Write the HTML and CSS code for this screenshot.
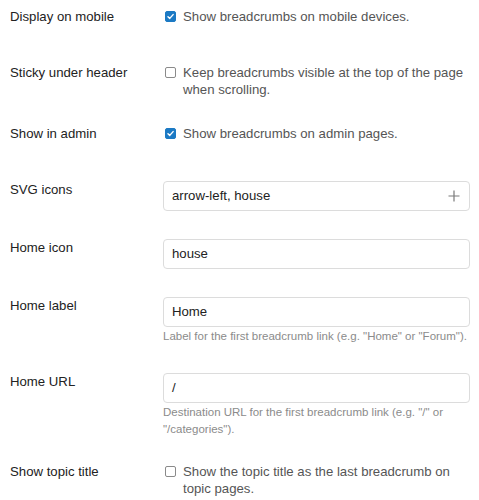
FILE: index.html
```html
<!DOCTYPE html>
<html lang="en">
<head>
<meta charset="utf-8">
<title>Breadcrumb settings</title>
<link rel="stylesheet" href="styles.css">
</head>
<body>
<div class="settings">
  <div class="row row-check">
    <div class="label">Display on mobile</div>
    <div class="control">
      <label class="check"><span class="box on"><svg viewBox="0 0 10 10"><path d="M2.2 5.2 4.2 7.1 7.9 2.9"/></svg></span><span class="check-text">Show breadcrumbs on mobile devices.</span></label>
    </div>
  </div>
  <div class="row row-check">
    <div class="label">Sticky under header</div>
    <div class="control">
      <label class="check"><span class="box"></span><span class="check-text">Keep breadcrumbs visible at the top of the page when scrolling.</span></label>
    </div>
  </div>
  <div class="row row-check">
    <div class="label">Show in admin</div>
    <div class="control">
      <label class="check"><span class="box on"><svg viewBox="0 0 10 10"><path d="M2.2 5.2 4.2 7.1 7.9 2.9"/></svg></span><span class="check-text">Show breadcrumbs on admin pages.</span></label>
    </div>
  </div>
  <div class="row row-input">
    <div class="label">SVG icons</div>
    <div class="control">
      <div class="field list-field"><span>arrow-left, house</span><svg class="plus" viewBox="0 0 12 12"><path d="M6 0.5v11M0.5 6h11"/></svg></div>
    </div>
  </div>
  <div class="row row-input">
    <div class="label">Home icon</div>
    <div class="control">
      <div class="field">house</div>
    </div>
  </div>
  <div class="row row-input">
    <div class="label">Home label</div>
    <div class="control">
      <div class="field">Home</div>
      <div class="help">Label for the first breadcrumb link (e.g. "Home" or "Forum").</div>
    </div>
  </div>
  <div class="row row-input row-tight">
    <div class="label">Home URL</div>
    <div class="control">
      <div class="field">/</div>
      <div class="help">Destination URL for the first breadcrumb link (e.g. "/" or "/categories").</div>
    </div>
  </div>
  <div class="row row-check">
    <div class="label">Show topic title</div>
    <div class="control">
      <label class="check"><span class="box"></span><span class="check-text">Show the topic title as the last breadcrumb on topic pages.</span></label>
    </div>
  </div>
</div>
</body>
</html>
```

FILE: styles.css
```css
html, body {
  margin: 0;
  padding: 0;
  background: #ffffff;
}

body {
  font-family: "Liberation Sans", Arial, sans-serif;
  font-size: 13.2px;
  line-height: 17px;
  color: #222222;
}

.settings {
  padding: 8px 9px 0 10px;
}

.row {
  display: flex;
  align-items: flex-start;
}

.row-check {
  min-height: 28px;
  margin-bottom: 27.5px;
}

.row-input {
  margin-bottom: 28px;
}

.row-input.row-tight {
  margin-bottom: 25px;
}

.label {
  width: 153px;
  flex: none;
  color: #222222;
}

.control {
  flex: 1;
  min-width: 0;
}

.check {
  display: flex;
  align-items: flex-start;
  color: #555555;
}

.box {
  flex: none;
  width: 11px;
  height: 11px;
  box-sizing: border-box;
  margin: 3px 7px 0 2px;
  border: 1px solid #8a8a8a;
  border-radius: 2px;
  background: #ffffff;
  display: flex;
}

.box.on {
  border-color: #1c7ac4;
  background: #1c7ac4;
}

.box svg {
  width: 100%;
  height: 100%;
}

.box svg path {
  fill: none;
  stroke: #ffffff;
  stroke-width: 1.6;
  stroke-linecap: round;
  stroke-linejoin: round;
}

.field {
  height: 30px;
  box-sizing: border-box;
  border: 1px solid #dcdcdc;
  border-radius: 4px;
  padding: 0 0 0 8px;
  display: flex;
  align-items: center;
  color: #222222;
  background: #ffffff;
}

.list-field {
  justify-content: space-between;
  padding-right: 9px;
}

.plus {
  width: 12px;
  height: 12px;
}

.plus path {
  stroke: #7a7a7a;
  stroke-width: 1.2;
  fill: none;
}

.help {
  margin-top: 1px;
  font-size: 11.5px;
  line-height: 17px;
  color: #8b8b8b;
}
```
